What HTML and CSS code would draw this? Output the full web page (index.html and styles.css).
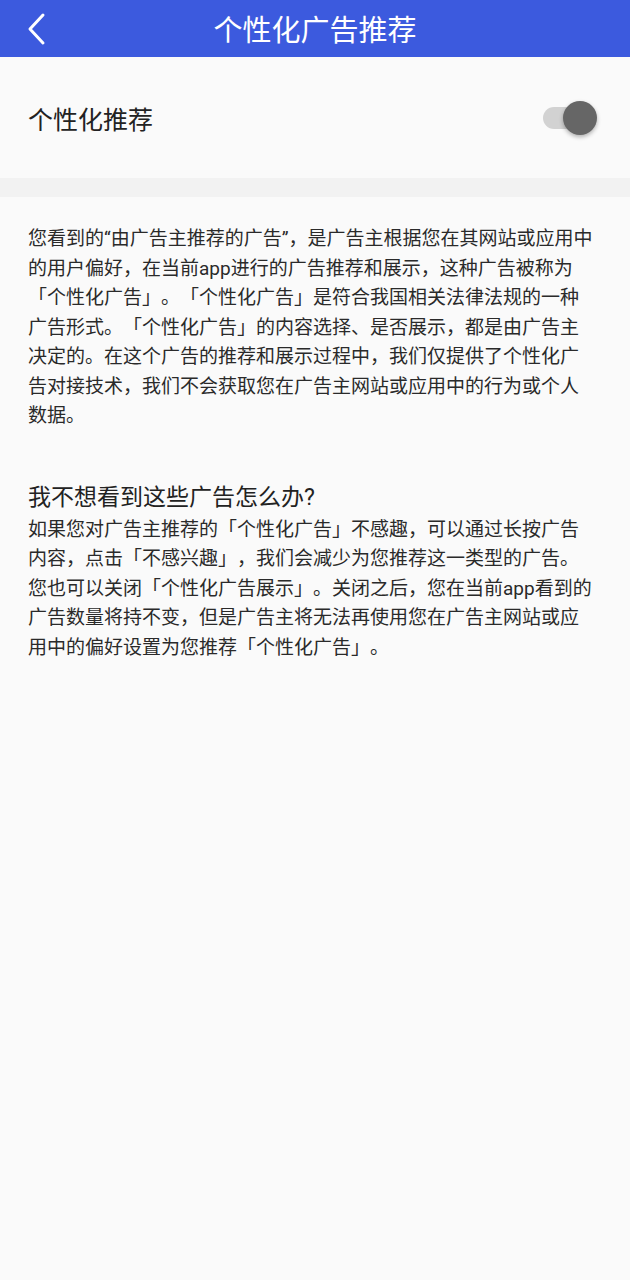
FILE: index.html
```html
<!DOCTYPE html>
<html lang="zh-CN">
<head>
<meta charset="utf-8">
<title>个性化广告推荐</title>
<link rel="stylesheet" href="styles.css">
</head>
<body>
<header class="topbar">
  <button class="back" aria-label="返回">
    <svg width="24" height="34" viewBox="0 0 24 34"><polyline points="17,3 4,17 17,31" fill="none" stroke="#fff" stroke-width="3" stroke-linecap="round" stroke-linejoin="round"/></svg>
  </button>
  <h1 class="title">个性化广告推荐</h1>
  <span class="spacer"></span>
</header>
<section class="setting">
  <span class="setting-label">个性化推荐</span>
  <span class="switch"><span class="track"></span><span class="thumb"></span></span>
</section>
<div class="divider"></div>
<main class="content">
  <p class="para">您看到的“由广告主推荐的广告”，是广告主根据您在其网站或应用中的用户偏好，在当前app进行的广告推荐和展示，这种广告被称为「个性化广告」。「个性化广告」是符合我国相关法律法规的一种广告形式。「个性化广告」的内容选择、是否展示，都是由广告主决定的。在这个广告的推荐和展示过程中，我们仅提供了个性化广告对接技术，我们不会获取您在广告主网站或应用中的行为或个人数据。</p>
  <h2 class="question">我不想看到这些广告怎么办?</h2>
  <p class="para">如果您对广告主推荐的「个性化广告」不感趣，可以通过长按广告内容，点击「不感兴趣」，我们会减少为您推荐这一类型的广告。您也可以关闭「个性化广告展示」。关闭之后，您在当前app看到的广告数量将持不变，但是广告主将无法再使用您在广告主网站或应用中的偏好设置为您推荐「个性化广告」。</p>
</main>
</body>
</html>
```

FILE: styles.css
```css
html, body {
  margin: 0;
  padding: 0;
  background: #fafafa;
  font-family: Roboto, "Noto Sans CJK SC", sans-serif;
  color: #222;
  text-spacing-trim: space-all;
}

.topbar {
  height: 57px;
  background: #3c5ade;
  display: grid;
  grid-template-columns: 70px 1fr 70px;
  align-items: center;
}

.back {
  background: none;
  border: 0;
  padding: 0 0 0 26px;
  margin: 0;
  height: 57px;
  display: flex;
  align-items: center;
  justify-content: flex-start;
}

.title {
  margin: 0;
  padding-top: 5px;
  text-align: center;
  color: #fff;
  font-size: 29px;
  font-weight: normal;
  line-height: 52px;
}

.setting {
  height: 121px;
  display: flex;
  align-items: center;
  justify-content: space-between;
  padding: 0 33px 0 28px;
  box-sizing: border-box;
}

.setting-label {
  font-size: 25px;
  color: #222;
}

.switch {
  position: relative;
  width: 54px;
  height: 34px;
}

.track {
  position: absolute;
  left: 0;
  top: 6px;
  width: 46px;
  height: 22px;
  border-radius: 11px;
  background: #d2d2d2;
}

.thumb {
  position: absolute;
  right: 0;
  top: 0;
  width: 34px;
  height: 34px;
  border-radius: 50%;
  background: #666;
  box-shadow: 0 2px 4px rgba(0, 0, 0, 0.3);
}

.divider {
  height: 19px;
  background: #f2f2f2;
}

.content {
  padding: 27px 35px 0 28px;
}

.para {
  margin: 0;
  font-size: 19px;
  line-height: 29.5px;
  color: #2a2a2a;
  text-wrap: pretty;
}

.question {
  margin: 50px 0 0 0;
  font-size: 23px;
  font-weight: normal;
  line-height: 34px;
  color: #222;
}
```
